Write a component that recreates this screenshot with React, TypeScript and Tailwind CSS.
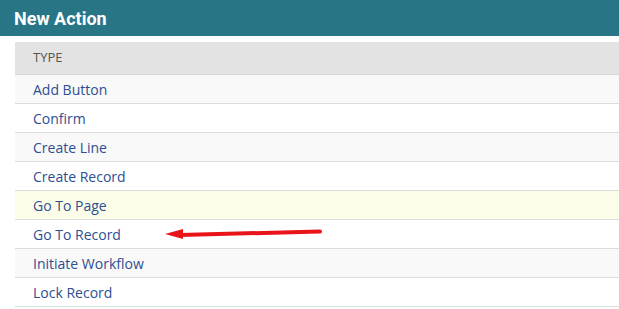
const rows = [
  { label: 'Add Button', bg: 'bg-[#f9f9f9]' },
  { label: 'Confirm', bg: 'bg-white' },
  { label: 'Create Line', bg: 'bg-[#f9f9f9]' },
  { label: 'Create Record', bg: 'bg-white' },
  { label: 'Go To Page', bg: 'bg-[#fcfde9]' },
  { label: 'Go To Record', bg: 'bg-white', arrow: true },
  { label: 'Initiate Workflow', bg: 'bg-[#f9f9f9]' },
  { label: 'Lock Record', bg: 'bg-white' },
];

export default function App() {
  return (
    <div className="w-[619px] h-[309px] bg-white overflow-hidden">
      <div className="h-[36px] bg-[#287586] flex items-center px-[14px]">
        <h1 className="text-white font-bold text-[18px] font-['Roboto',sans-serif]">New Action</h1>
      </div>
      <div className="ml-[15px] mt-[6px] font-['Open_Sans',sans-serif]">
        <div className="h-[33px] bg-[#e3e3e3] border-b border-[#d6d6d6] flex items-center pl-[18px] text-[13px] text-[#555]">
          TYPE
        </div>
        {rows.map((r) => (
          <div
            key={r.label}
            className={`relative h-[29px] ${r.bg} border-b border-[#dcdcdc] flex items-center pl-[18px] text-[14px] text-[#2d4f92]`}
          >
            {r.label}
            {r.arrow && (
              <svg className="absolute left-[145px] top-0" width="166" height="28" viewBox="0 0 166 28">
                <path d="M20 15 L160 11.5" stroke="#e8141a" strokeWidth="4" strokeLinecap="round" fill="none" />
                <path d="M5 14 L23 9 L23 19 Z" fill="#e8141a" />
              </svg>
            )}
          </div>
        ))}
      </div>
    </div>
  );
}
